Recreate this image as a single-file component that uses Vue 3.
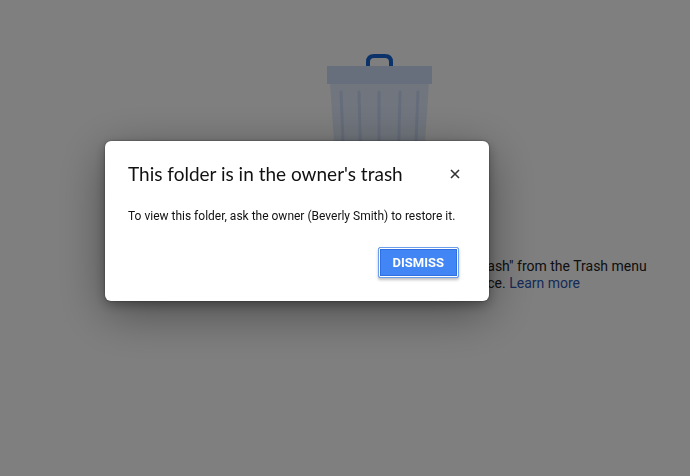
<script setup>
import { ref } from "vue";

const open = ref(true);

// tops of the ribs on the bin, each leans towards the middle
const ribs = [
  { x1: 14, x2: 19 },
  { x1: 32, x2: 35 },
  { x1: 52, x2: 52 },
  { x1: 73, x2: 70 },
  { x1: 91, x2: 86 },
];

function dismiss() {
  open.value = false;
}
</script>

<template>
  <main class="page">
    <svg class="bin" viewBox="0 0 105 180" aria-hidden="true">
      <path
        d="M41 13V8Q41 2 47 2H58Q64 2 64 8V13"
        fill="none"
        stroke="#1967d2"
        stroke-width="4"
      />
      <path d="M3 29H102L92 178H13Z" fill="#e2ebfb" />
      <line
        v-for="rib in ribs"
        :key="rib.x1"
        :x1="rib.x1"
        y1="38"
        :x2="rib.x2"
        y2="160"
        stroke="#ccdaf5"
        stroke-width="3"
        stroke-linecap="round"
      />
      <rect y="12" width="105" height="18" fill="#d0dff8" />
    </svg>
    <p class="hint">
      ash" from the Trash menu<br />
      ce. <a href="#">Learn more</a>
    </p>
  </main>

  <div v-if="open" class="overlay">
    <section class="dialog" role="dialog" aria-labelledby="dialog-title">
      <header>
        <h1 id="dialog-title">This folder is in the owner's trash</h1>
        <button class="close" aria-label="Close" @click="dismiss">
          <svg viewBox="0 0 12 12">
            <path d="M2 2L10 10M10 2L2 10" stroke="#333" stroke-width="1.6" />
          </svg>
        </button>
      </header>
      <p>To view this folder, ask the owner (Beverly Smith) to restore it.</p>
      <footer>
        <button class="dismiss" @click="dismiss">DISMISS</button>
      </footer>
    </section>
  </div>
</template>

<style>
body {
  margin: 0;
  background: #fff;
}
</style>

<style scoped>
.page {
  box-sizing: border-box;
  min-height: 100vh;
  padding: 54px 0 0 68px;
  display: flex;
  flex-direction: column;
  align-items: center;
  gap: 24px;
  font-family: Roboto, "Liberation Sans", sans-serif;
}
.bin {
  width: 105px;
  height: 180px;
}
.hint {
  margin: 0;
  padding-left: 376px;
  font-size: 14px;
  line-height: 17px;
  color: #202124;
  white-space: nowrap;
}
.hint a {
  color: #2a56b0;
  text-decoration: none;
}

.overlay {
  position: fixed;
  inset: 0;
  box-sizing: border-box;
  padding: 0 96px 34px 0;
  display: flex;
  align-items: center;
  justify-content: center;
  background: rgba(0, 0, 0, 0.5);
  font-family: Roboto, "Liberation Sans", sans-serif;
}
.dialog {
  box-sizing: border-box;
  width: 100%;
  max-width: 384px;
  padding: 23px;
  border-radius: 6px;
  background: #fff;
  box-shadow:
    0 0 2px rgba(0, 0, 0, 0.5),
    0 12px 48px rgba(0, 0, 0, 0.4),
    0 4px 12px rgba(0, 0, 0, 0.3);
}
header {
  display: flex;
  align-items: center;
  justify-content: space-between;
  padding-right: 4px;
}
h1 {
  margin: 0;
  font-family: Lato, sans-serif;
  font-size: 19px;
  font-weight: 400;
  line-height: 20px;
  color: #111;
}
.close {
  display: flex;
  padding: 1px;
  border: 0;
  background: none;
}
.close svg {
  width: 12px;
  height: 12px;
}
.dialog p {
  margin: 24px 0 23px;
  font-size: 12px;
  line-height: 16px;
  color: #111;
}
footer {
  display: flex;
  justify-content: flex-end;
  padding-right: 7px;
}
.dismiss {
  height: 31px;
  padding: 0 14px;
  border: 1px solid #6b9fec;
  border-radius: 2px;
  background: #4285f4;
  box-shadow:
    inset 0 0 0 1px #fff,
    inset 0 0 0 2px #2f6fdf,
    0 2px 3px rgba(0, 0, 0, 0.25);
  font-family: Roboto, "Liberation Sans", sans-serif;
  font-size: 13px;
  font-weight: 700;
  color: #fff;
}
</style>
